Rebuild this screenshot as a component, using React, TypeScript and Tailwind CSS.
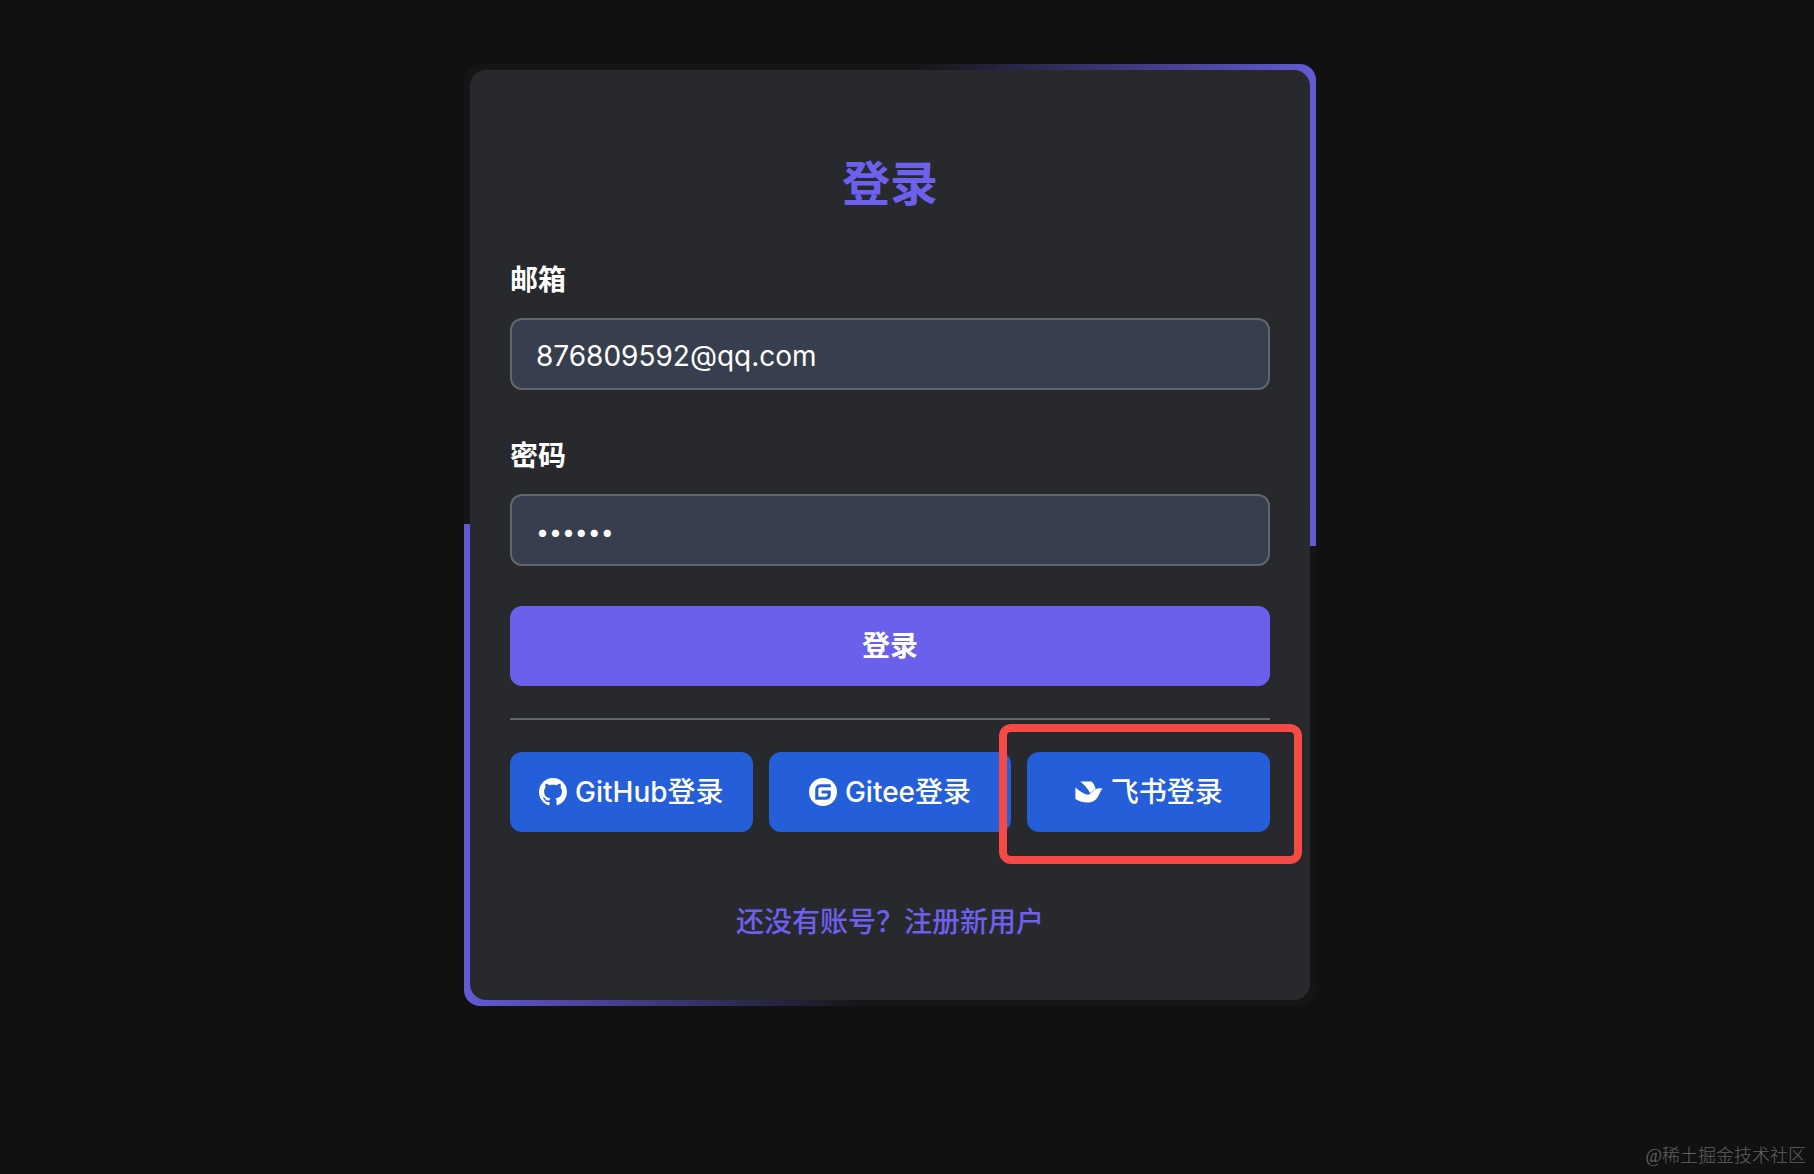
import { SiGitee } from 'react-icons/si'

const inputClass =
  'h-[72px] w-full rounded-xl border-2 border-[#62666d] bg-[#373e4d] px-6 pt-1 text-white outline-none'

function GitHubIcon() {
  return (
    <svg viewBox="0 0 16 16" className="size-7" fill="currentColor" aria-hidden="true">
      <path d="M8 0C3.58 0 0 3.58 0 8c0 3.54 2.29 6.53 5.47 7.59.4.07.55-.17.55-.38 0-.19-.01-.82-.01-1.49-2.01.37-2.53-.49-2.69-.94-.09-.23-.48-.94-.82-1.13-.28-.15-.68-.52-.01-.53.63-.01 1.08.58 1.23.82.72 1.21 1.87.87 2.33.66.07-.52.28-.87.51-1.07-1.78-.2-3.64-.89-3.64-3.95 0-.87.31-1.59.82-2.15-.08-.2-.36-1.02.08-2.12 0 0 .67-.21 2.2.82.64-.18 1.32-.27 2-.27s1.36.09 2 .27c1.53-1.04 2.2-.82 2.2-.82.44 1.1.16 1.92.08 2.12.51.56.82 1.27.82 2.15 0 3.07-1.87 3.75-3.65 3.95.29.25.54.73.54 1.48 0 1.07-.01 1.93-.01 2.2 0 .21.15.46.55.38A8.01 8.01 0 0 0 16 8c0-4.42-3.58-8-8-8z" />
    </svg>
  )
}

function FeishuIcon() {
  return (
    <svg viewBox="0 0 28 28" className="size-7" fill="currentColor" aria-hidden="true">
      <path d="M5.200 3.600H16c.7 0 1.200.3 1.600.9 1.500 2 2.500 4.200 3.100 6.500-1.900.8-3.600 2.400-5.500 4.300C12.600 10.600 9.400 6.800 5.200 3.600z" />
      <path d="M.4 9.400c4 3.700 7.800 6 12.300 7.400 1.200-.1 2.300-.8 3.200-1.700 2-1.900 3.600-3.600 6-4.300 1.900-.6 3.700-.6 5.600-.1-1.700 1.700-2.400 3.600-3.400 5.700-2.300 5.300-5.900 8.100-11.600 8.100-4.300 0-8.100-.9-11.400-3-.5-.3-.7-.6-.7-1.200z" />
    </svg>
  )
}

const providers = [
  { label: 'GitHub登录', icon: <GitHubIcon /> },
  { label: 'Gitee登录', icon: <SiGitee className="size-7" /> },
  { label: '飞书登录', icon: <FeishuIcon />, highlighted: true },
]

function Field({ id, label, type, value }: { id: string; label: string; type: string; value: string }) {
  return (
    <div>
      <label htmlFor={id} className="mb-[18px] block text-[28px] leading-10 font-bold text-white">
        {label}
      </label>
      <input
        id={id}
        type={type}
        defaultValue={value}
        className={`${inputClass} ${type === 'password' ? 'text-[23px]' : 'text-[28px]'}`}
      />
    </div>
  )
}

export default function App() {
  return (
    <div className="flex min-h-screen flex-col bg-[#111111] font-['Inter','Noto_Sans_CJK_SC',sans-serif]">
      <main className="flex flex-1 items-start justify-center pt-16 pr-[34px]">
        <div className="relative w-full max-w-[852px] overflow-hidden rounded-2xl bg-[#151516] p-1.5">
          {/* the two lit halves of the border */}
          <div className="absolute top-0 right-0 h-[482px] w-[47%] bg-linear-to-r from-transparent to-[#635ad6]" />
          <div className="absolute bottom-0 left-0 h-[482px] w-[47%] bg-linear-to-l from-transparent to-[#635ad6]" />

          <form
            className="relative rounded-2xl bg-[#28292d] px-10 pt-[86px] pb-[58px]"
            onSubmit={(e) => e.preventDefault()}
          >
            <h1 className="text-center text-5xl leading-[56px] font-bold text-[#6c60ec]">登录</h1>

            <div className="mt-12 flex flex-col gap-[46px]">
              <Field id="email" label="邮箱" type="text" value="876809592@qq.com" />
              <Field id="password" label="密码" type="password" value="123456" />
            </div>

            <button
              type="submit"
              className="mt-10 h-20 w-full rounded-xl bg-[#6a60eb] text-[28px] font-bold text-white"
            >
              登录
            </button>

            <hr className="my-8 border-t-2 border-[#62656a]" />

            <div className="grid grid-cols-3 gap-4">
              {providers.map(({ label, icon, highlighted }) => (
                <div key={label} className="relative">
                  <button
                    type="button"
                    className="flex h-20 w-full items-center justify-center gap-2 rounded-xl bg-[#255ed9] text-[28px] font-medium whitespace-nowrap text-white"
                  >
                    {icon}
                    {label}
                  </button>
                  {highlighted && (
                    <span className="pointer-events-none absolute -top-7 -right-8 -bottom-8 -left-7 rounded-xl border-8 border-[#f54a45]" />
                  )}
                </div>
              ))}
            </div>

            <p className="mt-[70px] text-center text-[28px] leading-10 font-medium">
              <a href="#register" className="text-[#6c60ec]">
                还没有账号？注册新用户
              </a>
            </p>
          </form>
        </div>
      </main>
      <footer className="px-2 pb-1 text-right font-['Liberation_Serif','Noto_Sans_CJK_SC',serif] text-lg font-light text-[#616161]">
        @稀土掘金技术社区
      </footer>
    </div>
  )
}
